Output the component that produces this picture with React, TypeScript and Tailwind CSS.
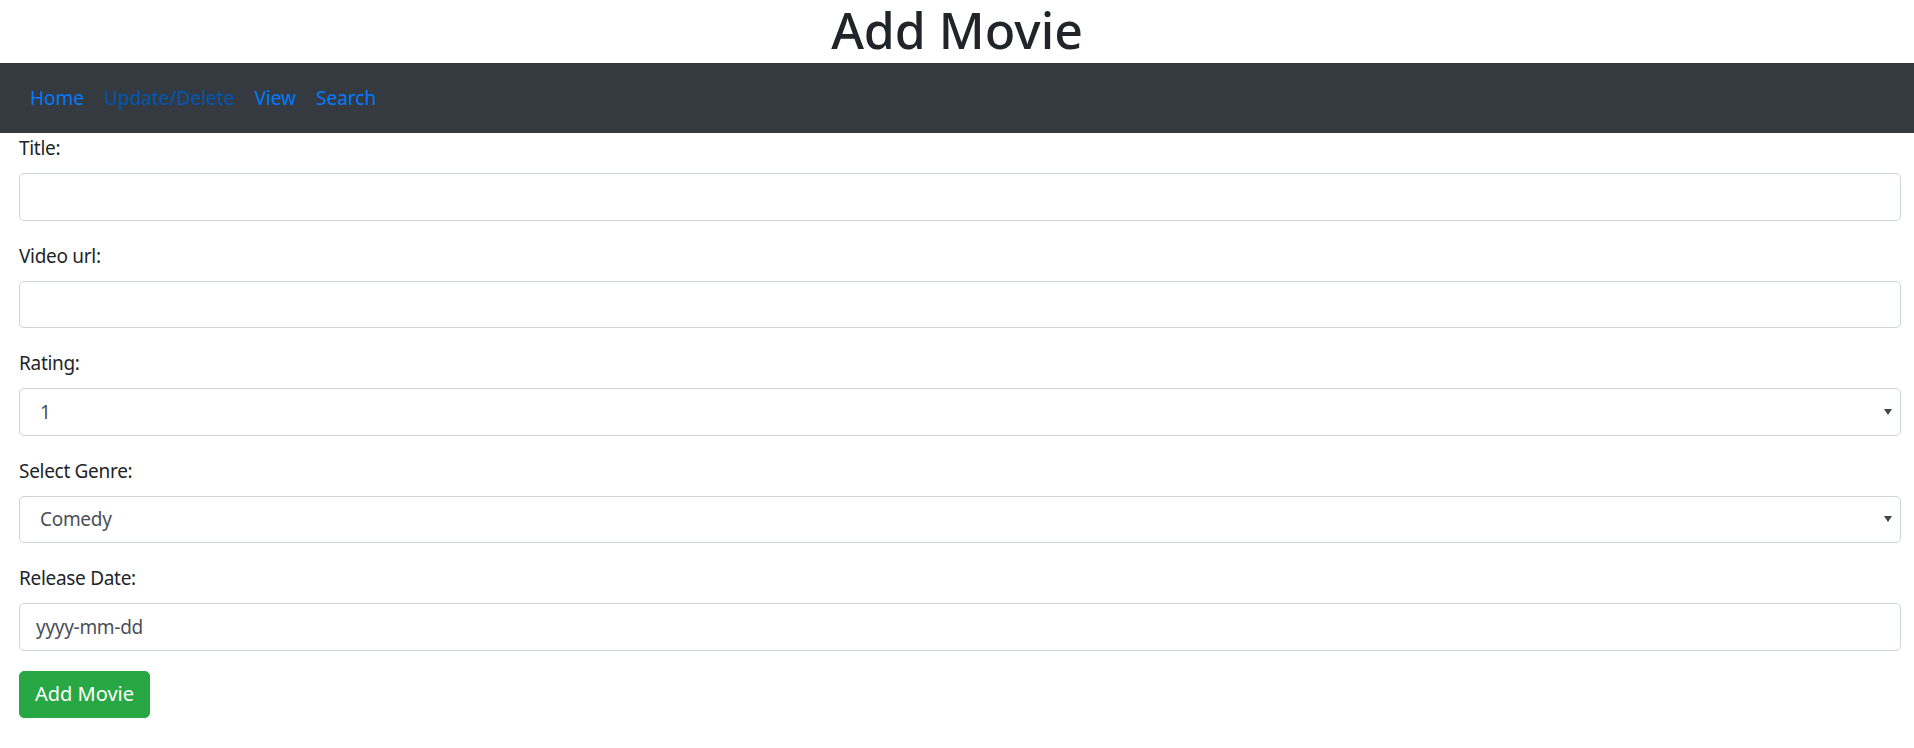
import React from "react";

const font = { fontFamily: '"Noto Sans", "Open Sans", sans-serif' };

function Label({ children }: { children: React.ReactNode }) {
  return <label className="block h-[30px] text-[19px] tracking-[-0.3px] leading-[30px] text-[#212529] mb-[10px]">{children}</label>;
}

function SelectBox({ value }: { value: string }) {
  return (
    <div className="relative">
      <select className="block w-full h-[47.5px] appearance-none rounded-[5px] border border-[#ced4da] bg-white pl-[20px] pr-[40px] text-[19px] tracking-[-0.3px] text-[#495057] outline-none" style={font} defaultValue={value}>
        <option>{value}</option>
      </select>
      <span className="pointer-events-none absolute right-[9px] top-1/2 -translate-y-1/2 h-0 w-0 border-l-[4px] border-r-[4px] border-t-[6px] border-l-transparent border-r-transparent border-t-[#444]" />
    </div>
  );
}

export default function App() {
  return (
    <div className="bg-white min-h-[748px] text-[#212529]" style={font}>
      <h1 className="pb-[3px] text-center text-[50px] leading-[60px] font-medium text-[#212529]">Add Movie</h1>
      <nav className="h-[70px] bg-[#343a40] px-[20px] flex items-center">
        <a className="px-[10px] text-[19px] leading-[30px] text-[#007bff]">Home</a>
        <a className="px-[10px] text-[19px] leading-[30px] text-[#0056b3]">Update/Delete</a>
        <a className="px-[10px] text-[19px] leading-[30px] text-[#007bff]">View</a>
        <a className="px-[10px] text-[19px] leading-[30px] text-[#007bff]">Search</a>
      </nav>
      <form className="pl-[19px] pr-[13px]">
        <div className="mb-[20px]">
          <Label>Title:</Label>
          <input className="block w-full h-[47.5px] rounded-[5px] border border-[#ced4da] px-[15px] text-[19px] text-[#495057] outline-none" />
        </div>
        <div className="mb-[20px]">
          <Label>Video url:</Label>
          <input className="block w-full h-[47.5px] rounded-[5px] border border-[#ced4da] px-[15px] text-[19px] text-[#495057] outline-none" />
        </div>
        <div className="mb-[20px]">
          <Label>Rating:</Label>
          <SelectBox value="1" />
        </div>
        <div className="mb-[20px]">
          <Label>Select Genre:</Label>
          <SelectBox value="Comedy" />
        </div>
        <div className="mb-[20px]">
          <Label>Release Date:</Label>
          <input placeholder="yyyy-mm-dd" className="block w-full h-[47.5px] rounded-[5px] border border-[#ced4da] px-[16px] text-[19px] tracking-[-0.3px] text-[#495057] placeholder:text-[#495057] outline-none" style={font} />
        </div>
        <button type="button" className="h-[47.5px] rounded-[5px] bg-[#28a745] px-[15px] text-[20px] leading-[30px] text-white border border-[#28a745]" style={font}>Add Movie</button>
      </form>
    </div>
  );
}
